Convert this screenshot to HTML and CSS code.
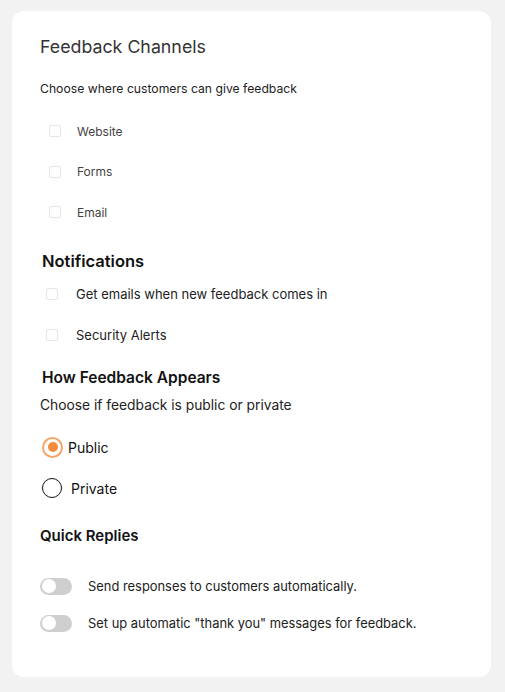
FILE: index.html
```html
<!DOCTYPE html>
<html>
<head>
<meta charset="utf-8">
<link rel="stylesheet" href="styles.css">
</head>
<body>
<div class="card">
  <h2 class="title">Feedback Channels</h2>
  <p class="sub">Choose where customers can give feedback</p>
  <div class="checks">
    <label class="check"><span class="box"></span><span>Website</span></label>
    <label class="check"><span class="box"></span><span>Forms</span></label>
    <label class="check"><span class="box"></span><span>Email</span></label>
  </div>

  <h3 class="head notif">Notifications</h3>
  <div class="checks checks2">
    <label class="check"><span class="box"></span><span>Get emails when new feedback comes in</span></label>
    <label class="check"><span class="box"></span><span>Security Alerts</span></label>
  </div>

  <h3 class="head appear">How Feedback Appears</h3>
  <p class="sub2">Choose if feedback is public or private</p>
  <div class="radios">
    <label class="radio on"><span class="circle"></span><span>Public</span></label>
    <label class="radio"><span class="circle"></span><span class="pl">Private</span></label>
  </div>

  <h3 class="head quick">Quick Replies</h3>
  <div class="toggles">
    <label class="tog"><span class="sw"></span><span>Send responses to customers automatically.</span></label>
    <label class="tog"><span class="sw"></span><span>Set up automatic "thank you" messages for feedback.</span></label>
  </div>
</div>
</body>
</html>
```
FILE: styles.css
```css
html, body { margin: 0; padding: 0; }
body {
  background: #f2f2f2;
  font-family: "Inter", "Lato", sans-serif;
  color: #222;
  padding: 11px 14px 15px 12px;
}
.card {
  background: #fff;
  border-radius: 12px;
  height: 666px;
  box-sizing: border-box;
  padding: 24px 20px 0 28px;
}
.title {
  margin: 0;
  font-size: 17.8px;
  font-weight: 400;
  color: #333;
  line-height: 24px;
}
.sub {
  margin: 21px 0 0;
  font-size: 12.2px;
  line-height: 18px;
  color: #222;
}
.checks {
  display: flex;
  flex-direction: column;
  gap: 22.5px;
  margin-top: 24px;
  padding-left: 9px;
}
.check {
  display: flex;
  align-items: center;
  height: 18px;
  font-size: 12px;
  color: #444;
}
.box {
  width: 10px;
  height: 10px;
  border: 1px solid #e6e6e6;
  border-radius: 2px;
  margin-right: 16px;
}
.head {
  margin: 0;
  font-size: 16.5px;
  font-weight: 600;
  color: #111;
  line-height: 22px;
}
.notif { margin-top: 29px; padding-left: 2px; }
.checks2 { margin-top: 13px; padding-left: 6px; gap: 23px; }
.checks2 .check { font-size: 13px; color: #222; }
.checks2 .box { margin-right: 18px; }
.appear { margin-top: 23px; font-size: 15.5px; padding-left: 2px; }
.sub2 {
  margin: 6px 0 0;
  font-size: 13.8px;
  line-height: 20px;
  color: #222;
}
.radios {
  display: flex;
  flex-direction: column;
  gap: 19px;
  margin-top: 21px;
  padding-left: 2px;
}
.radio {
  display: flex;
  align-items: center;
  height: 22px;
  font-size: 14px;
  color: #111;
}
.circle {
  width: 18px;
  height: 18px;
  border: 1.5px solid #111;
  border-radius: 50%;
  box-sizing: content-box;
  margin-right: 5px;
  position: relative;
}
.radio.on .circle {
  border: 2px solid #f8a468;
  width: 17px;
  height: 17px;
}
.radio.on .circle::after {
  content: "";
  position: absolute;
  left: 3.5px;
  top: 3.5px;
  width: 10px;
  height: 10px;
  border-radius: 50%;
  background: #f58b3c;
}
.pl { margin-left: 4px; }
.quick { margin-top: 26px; font-size: 15px; }
.toggles {
  display: flex;
  flex-direction: column;
  gap: 19px;
  margin-top: 30px;
}
.tog {
  display: flex;
  align-items: center;
  height: 18px;
  font-size: 12.9px;
  color: #222;
}
.sw {
  width: 32px;
  height: 17px;
  border-radius: 9px;
  background: #cfcfcf;
  position: relative;
  margin-right: 16px;
}
.sw::after {
  content: "";
  position: absolute;
  left: 1.5px;
  top: 1.5px;
  width: 14px;
  height: 14px;
  border-radius: 50%;
  background: #fff;
}
```
